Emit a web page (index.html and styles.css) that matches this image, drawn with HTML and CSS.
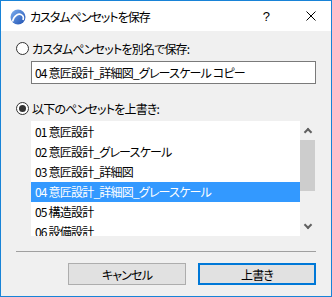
FILE: index.html
```html
<!DOCTYPE html>
<html lang="ja">
<head>
  <meta charset="UTF-8" />
  <title>カスタムペンセットを保存</title>
  <link rel="stylesheet" href="styles.css">
</head>
<body>
  <div class="dialog">
    <div class="title-bar">
      <svg class="app-icon" width="16" height="16" viewBox="0 0 16 16">
        <defs>
          <linearGradient id="logo" x1="0" y1="0" x2="1" y2="1">
            <stop offset="0" stop-color="#7fb0f0"/>
            <stop offset="1" stop-color="#1d4fb0"/>
          </linearGradient>
        </defs>
        <circle cx="8" cy="8" r="7.5" fill="url(#logo)"/>
        <path d="M2.5 12.5 C4 6 9 3.5 12.5 6.5 C13.5 7.5 13.5 9.5 13 11" fill="none" stroke="#fff" stroke-width="1.6"/>
      </svg>
      <span class="title">カスタムペンセットを保存</span>
      <span class="title-btn help">?</span>
      <span class="title-btn close">
        <svg width="10" height="10" viewBox="0 0 10 10"><path d="M0.5 0.5 L9.5 9.5 M9.5 0.5 L0.5 9.5" stroke="#000" stroke-width="1"/></svg>
      </span>
    </div>

    <div class="content">
      <label class="radio-row first">
        <span class="radio"></span>
        <span class="jp">カスタムペンセットを別名で保存:</span>
      </label>
      <div class="text-field jp">04 意匠設計_詳細図_グレースケール コピー</div>

      <label class="radio-row second">
        <span class="radio checked"></span>
        <span class="jp">以下のペンセットを上書き:</span>
      </label>
      <div class="list-box">
        <ul class="items jp">
          <li>01 意匠設計</li>
          <li>02 意匠設計_グレースケール</li>
          <li>03 意匠設計_詳細図</li>
          <li class="selected">04 意匠設計_詳細図_グレースケール</li>
          <li>05 構造設計</li>
          <li>06 設備設計</li>
        </ul>
        <div class="scrollbar">
          <span class="arrow up"></span>
          <div class="track"><div class="thumb"></div></div>
          <span class="arrow down"></span>
        </div>
      </div>

      <div class="separator"></div>

      <div class="buttons">
        <button class="btn jp">キャンセル</button>
        <button class="btn jp default">上書き</button>
      </div>
    </div>
  </div>
</body>
</html>
```

FILE: styles.css
```css
body {
  margin: 0;
  font-family: "Noto Sans CJK JP", "Noto Sans", sans-serif;
  font-size: 12px;
  font-feature-settings: "palt";
  color: #000;
  background: #fff;
}

.jp {
  letter-spacing: -0.8px;
}

.dialog {
  width: 332px;
  height: 297px;
  box-sizing: border-box;
  border: 1px solid #1883d7;
  background: #f0f0f0;
  display: flex;
  flex-direction: column;
}

.title-bar {
  height: 30px;
  background: #fff;
  display: flex;
  align-items: center;
  padding-left: 9px;
}

.app-icon {
  margin-top: 1px;
}

.title {
  margin-left: 4px;
  flex: 1;
  font-size: 12px;
  letter-spacing: -1px;
}

.title-btn {
  display: flex;
  align-items: center;
  justify-content: center;
}

.help {
  font-family: "Liberation Sans", sans-serif;
  font-size: 13px;
  margin-right: 36px;
}

.close {
  margin-right: 15px;
}

.content {
  padding: 0 15px;
  display: flex;
  flex-direction: column;
}

.radio-row {
  display: flex;
  align-items: center;
  height: 20px;
  gap: 3px;
}

.radio-row.first {
  margin-top: 7px;
}

.radio-row.second {
  margin-top: 14px;
}

.radio {
  width: 13px;
  height: 13px;
  box-sizing: border-box;
  border: 1px solid #333;
  border-radius: 50%;
  background: #fff;
  display: flex;
  align-items: center;
  justify-content: center;
}

.radio.checked::after {
  content: "";
  width: 7px;
  height: 7px;
  border-radius: 50%;
  background: #333;
}

.text-field {
  margin: 3px 0 0 15px;
  height: 23px;
  box-sizing: border-box;
  border: 1px solid #7a7a7a;
  background: #fff;
  padding-left: 3px;
  line-height: 21px;
  white-space: nowrap;
}

.list-box {
  margin: 3px 1px 0 15px;
  height: 115px;
  display: flex;
  background: #fff;
  overflow: hidden;
}

.items {
  list-style: none;
  margin: 0;
  padding: 1px 0 0;
  flex: 1;
}

.items li {
  height: 20px;
  line-height: 20px;
  padding-left: 4px;
  white-space: nowrap;
}

.items li.selected {
  background: #3399ff;
  color: #fff;
}

.scrollbar {
  width: 15px;
  background: #f0f0f0;
  display: flex;
  flex-direction: column;
  align-items: center;
}

.track {
  flex: 1;
  width: 100%;
  padding-top: 5px;
}

.thumb {
  height: 51px;
  background: #cdcdcd;
}

.arrow {
  width: 4px;
  height: 4px;
  border-left: 2px solid #606060;
  border-top: 2px solid #606060;
}

.arrow.up {
  margin-top: 8px;
  transform: rotate(45deg);
}

.arrow.down {
  margin-bottom: 8px;
  transform: rotate(225deg);
}

.separator {
  margin-top: 15px;
  height: 1px;
  background: #a0a0a0;
}

.buttons {
  margin-top: 11px;
  display: flex;
  justify-content: flex-end;
  gap: 12px;
}

.btn {
  width: 118px;
  height: 22px;
  box-sizing: border-box;
  border: 1px solid #adadad;
  background: #e1e1e1;
  font-family: inherit;
  font-size: 12px;
  font-feature-settings: "palt";
  padding: 0;
  color: #000;
}

.btn.default {
  border: 2px solid #0078d7;
}
```
